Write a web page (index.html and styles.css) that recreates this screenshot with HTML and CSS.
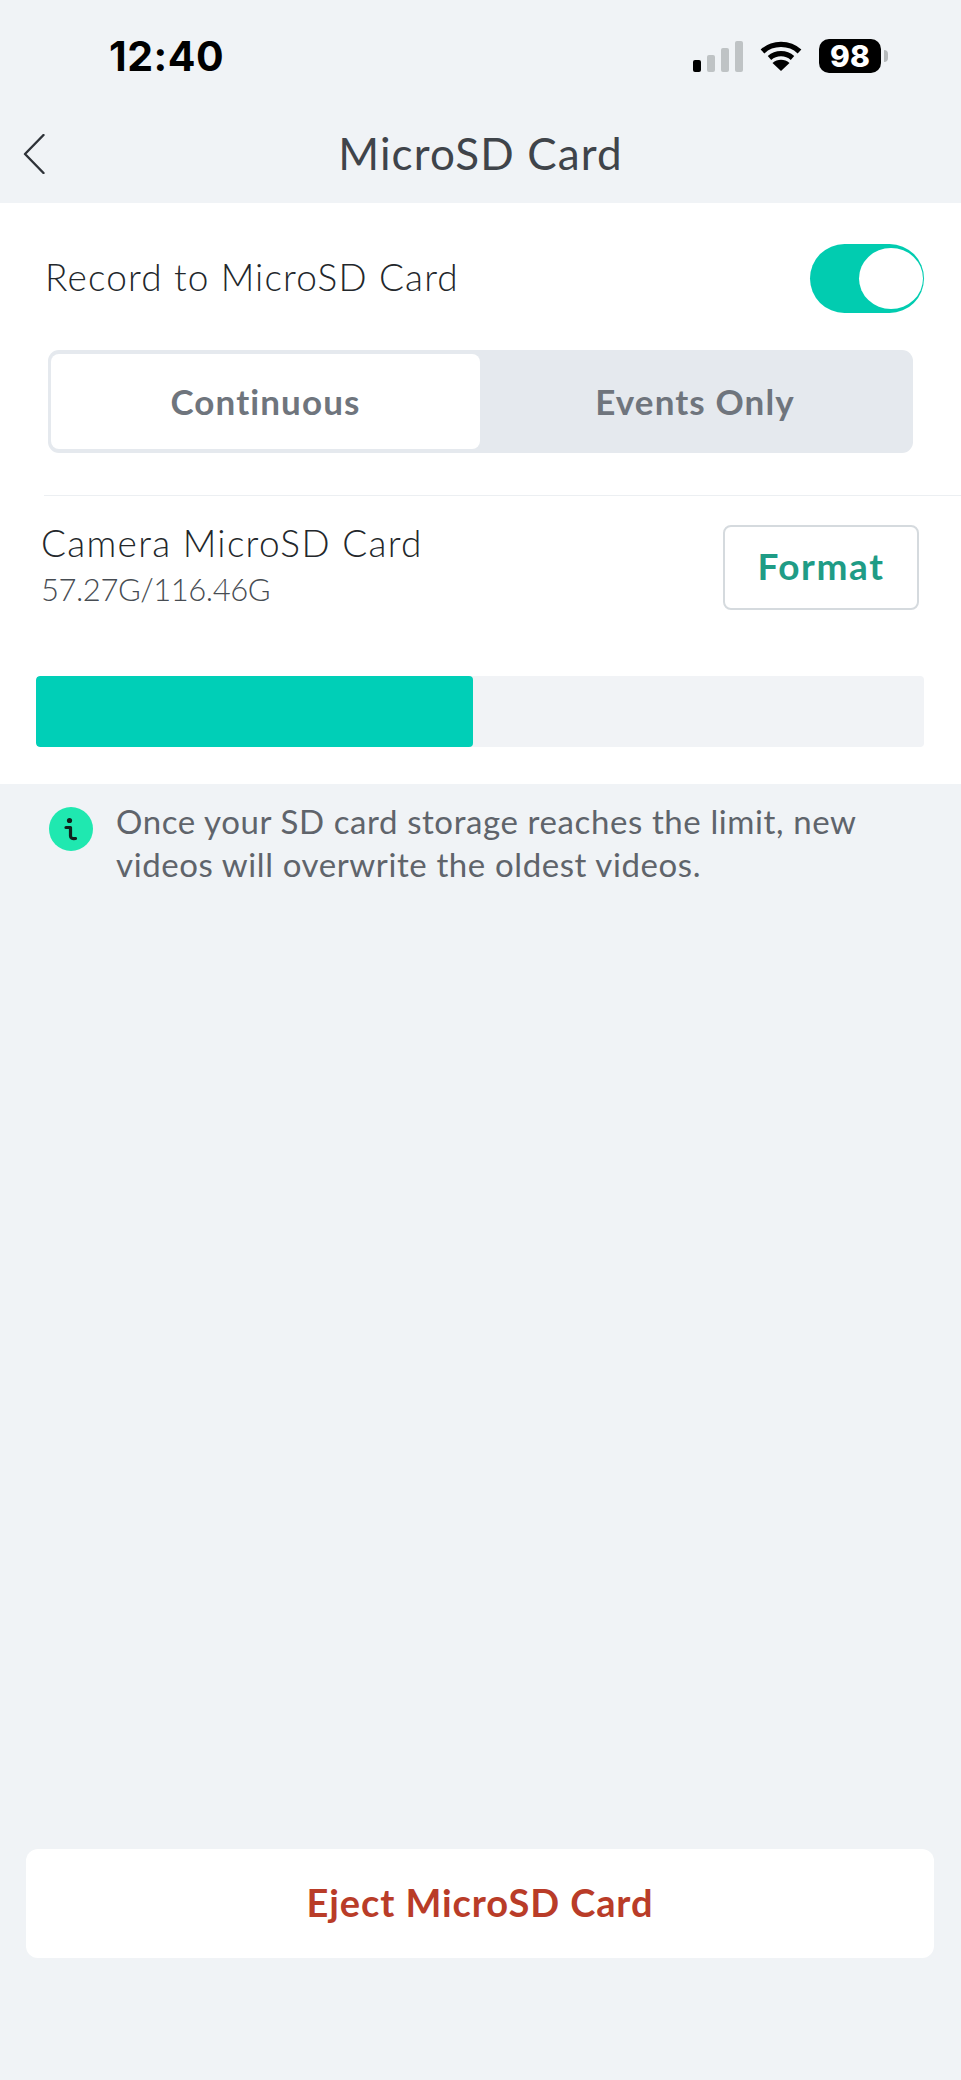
FILE: index.html
```html
<!DOCTYPE html>
<html lang="en">
<head>
<meta charset="utf-8">
<title>MicroSD Card</title>
<link rel="stylesheet" href="styles.css">
</head>
<body>
<div class="screen">
  <div class="status">
    <span class="time">12:40</span>
    <div class="status-icons">
      <div class="signal">
        <i class="bar b1"></i><i class="bar b2"></i><i class="bar b3"></i><i class="bar b4"></i>
      </div>
      <svg class="wifi" width="44" height="31" viewBox="0 0 42 31">
        <path d="M2.5 11.5C12.5 2 29.5 2 39.5 11.5" fill="none" stroke="#000" stroke-width="5.4"/>
        <path d="M9.5 18C16 12.2 26 12.2 32.5 18" fill="none" stroke="#000" stroke-width="5.2"/>
        <path d="M21 31L12.5 23C17.5 18.8 24.5 18.8 29.5 23Z" fill="#000"/>
      </svg>
      <div class="battery"><span class="batt-body">98</span><i class="batt-nub"></i></div>
    </div>
  </div>
  <header class="nav">
    <svg class="back" width="22" height="40" viewBox="0 0 22 40">
      <path d="M20.5 1L2 20L20.5 39" fill="none" stroke="#2e3238" stroke-width="2.4" stroke-linecap="round" stroke-linejoin="round"/>
    </svg>
    <h1 class="title">MicroSD Card</h1>
  </header>
  <section class="card">
    <div class="record-row">
      <span class="record-label">Record to MicroSD Card</span>
      <div class="toggle"><i class="knob"></i></div>
    </div>
    <div class="segment">
      <div class="seg seg-on">Continuous</div>
      <div class="seg seg-off">Events Only</div>
    </div>
    <div class="divider"></div>
    <div class="storage-row">
      <div class="storage-text">
        <div class="storage-name">Camera MicroSD Card</div>
        <div class="storage-size">57.27G/116.46G</div>
      </div>
      <button class="format">Format</button>
    </div>
    <div class="meter"><div class="meter-fill" style="width:49.2%"></div></div>
  </section>
  <div class="note">
    <svg class="info" width="44" height="44" viewBox="0 0 44 44">
      <circle cx="22" cy="22" r="22" fill="#1fe8b0"/>
      <circle cx="20.5" cy="13.5" r="2.6" fill="#12201c"/>
      <path d="M17 20.5H21.5V29C21.5 31 23 32 26.5 31.5" fill="none" stroke="#12201c" stroke-width="3.2" stroke-linecap="round" stroke-linejoin="round"/>
    </svg>
    <p class="note-text">Once your SD card storage reaches the limit, new videos will overwrite the oldest videos.</p>
  </div>
  <button class="eject">Eject MicroSD Card</button>
</div>
</body>
</html>
```
FILE: styles.css
```css
* { box-sizing: border-box; }
html, body { margin: 0; padding: 0; }
body {
  background: #f0f3f6;
  font-family: Lato, "Open Sans", sans-serif;
  color: #3a3e44;
}
.screen {
  width: 961px;
  height: 2080px;
  display: flex;
  flex-direction: column;
  overflow: hidden;
}
.status {
  height: 112px;
  padding: 39px 73px 0 109px;
  display: flex;
  justify-content: space-between;
  align-items: flex-start;
}
.time {
  font-family: Inter, "Liberation Sans", sans-serif;
  font-weight: 700;
  font-size: 41px;
  line-height: 34px;
  color: #000;
  letter-spacing: 0.5px;
}
.status-icons {
  display: flex;
  align-items: flex-start;
  gap: 16px;
}
.signal {
  display: flex;
  align-items: flex-end;
  gap: 5.5px;
  height: 31px;
  margin-top: 2px;
}
.bar {
  display: block;
  width: 8.5px;
  border-radius: 2px;
  background: #bfc3c5;
}
.bar.b1 { height: 12px; background: #000; }
.bar.b2 { height: 17px; }
.bar.b3 { height: 24px; }
.bar.b4 { height: 31px; }
.wifi { display: block; margin-top: 1px; }
.battery {
  display: flex;
  align-items: center;
  gap: 3px;
}
.batt-body {
  width: 62px;
  height: 34px;
  border-radius: 10px;
  background: #000;
  color: #fff;
  font-family: Inter, "Liberation Sans", sans-serif;
  font-weight: 800;
  font-size: 30px;
  line-height: 34px;
  text-align: center;
}
.batt-nub {
  display: block;
  width: 4px;
  height: 12px;
  border-radius: 0 4px 4px 0;
  background: #b5b9bb;
}
.nav {
  height: 91px;
  padding-left: 23px;
  display: flex;
  align-items: center;
  position: relative;
}
.back { display: block; margin-top: -8px; }
.title {
  position: absolute;
  left: 0;
  right: 0;
  top: 16px;
  margin: 0;
  text-align: center;
  font-size: 44px;
  line-height: 50px;
  letter-spacing: 1.1px;
  font-weight: 400;
  color: #3f444a;
}
.card {
  background: #fff;
  height: 581px;
  display: flex;
  flex-direction: column;
}
.record-row {
  height: 147px;
  padding: 0 37px 0 45px;
  display: flex;
  justify-content: space-between;
  align-items: flex-start;
}
.record-label {
  font-size: 37px;
  line-height: 44px;
  letter-spacing: 1.15px;
  margin-top: 52px;
  font-weight: 300;
  color: #23272b;
}
.toggle {
  width: 114px;
  height: 69px;
  margin-top: 41px;
  border-radius: 35px;
  background: #01ccb0;
  padding: 4px 1px;
  display: flex;
  justify-content: flex-end;
}
.knob {
  display: block;
  width: 64px;
  height: 61px;
  border-radius: 50%;
  background: #fff;
}
.segment {
  width: 865px;
  height: 103px;
  margin-left: 48px;
  padding: 4px 0 4px 3px;
  background: #e5e9ee;
  border-radius: 11px;
  display: flex;
}
.seg {
  flex: 1;
  display: flex;
  align-items: center;
  justify-content: center;
  font-size: 35px;
  letter-spacing: 1.1px;
  font-weight: 700;
  color: #6f757d;
  padding-bottom: 2px;
}
.seg-off { padding-right: 3px; }
.seg-on {
  flex: 0 0 429px;
  background: #fff;
  border-radius: 8px;
}
.divider {
  height: 1px;
  margin: 42px 0 0 44px;
  background: #eceff2;
}
.storage-row {
  height: 180px;
  padding: 29px 42px 0 41px;
  display: flex;
  justify-content: space-between;
  align-items: flex-start;
}
.storage-text { margin-top: -4px; }
.storage-name {
  font-size: 37px;
  line-height: 44px;
  letter-spacing: 1.3px;
  font-weight: 300;
  color: #23272b;
}
.storage-size {
  font-size: 31px;
  line-height: 40px;
  letter-spacing: -0.45px;
  font-weight: 300;
  color: #474c52;
  margin-top: 4px;
}
.format {
  width: 196px;
  height: 85px;
  background: #fff;
  border: 2px solid #d5dade;
  border-radius: 8px;
  font-family: inherit;
  font-size: 37px;
  letter-spacing: 1.6px;
  font-weight: 700;
  color: #1f9c86;
  padding: 0 0 5px;
}
.meter {
  margin-left: 36px;
  width: 888px;
  height: 71px;
  background: #f1f3f6;
  border-radius: 4px;
  overflow: hidden;
}
.meter-fill {
  height: 100%;
  background: #00cfb7;
  border-radius: 4px;
}
.note {
  display: flex;
  gap: 23px;
  padding: 23px 60px 0 49px;
}
.info { display: block; flex: none; }
.note-text {
  margin: -7px 0 0;
  font-size: 33px;
  line-height: 43px;
  letter-spacing: 0.6px;
  color: #5f646b;
  font-weight: 400;
}
.eject {
  display: block;
  margin: auto 27px 122px 26px;
  height: 109px;
  background: #fff;
  border: 0;
  border-radius: 12px;
  font-family: inherit;
  font-size: 38px;
  letter-spacing: 0.9px;
  font-weight: 700;
  color: #b93c28;
  padding: 0 0 3px;
}
```
